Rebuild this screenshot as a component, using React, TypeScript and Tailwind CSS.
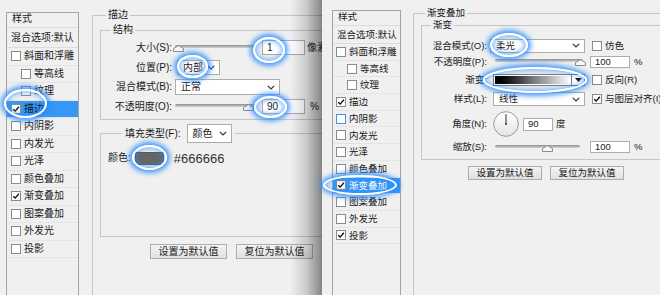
import React from "react";

type Item = { label: string; indent: boolean; checked: boolean; selected: boolean; hover: boolean };

const NAMES = ["斜面和浮雕", "等高线", "纹理", "描边", "内阴影", "内发光", "光泽", "颜色叠加", "渐变叠加", "图案叠加", "外发光", "投影"];

const makeItems = (checked: string[], selected: string, hover = ""): Item[] =>
  NAMES.map((label) => ({
    label,
    indent: label === "等高线" || label === "纹理",
    checked: checked.includes(label),
    selected: label === selected,
    hover: label === hover,
  }));

function Box({ checked = false, blue = false }: { checked?: boolean; blue?: boolean }) {
  return (
    <span
      className={`flex h-[10px] w-[10px] shrink-0 items-center justify-center border bg-white ${
        blue ? "border-[#3d95f0]" : "border-[#8a8a8a]"
      }`}
    >
      {checked && (
        <svg viewBox="0 0 10 10" className="h-[8px] w-[8px]">
          <path d="M1.5 5.2 4 7.6 8.6 2.2" fill="none" stroke="#111" strokeWidth="1.7" />
        </svg>
      )}
    </span>
  );
}

function Chevron() {
  return (
    <svg viewBox="0 0 8 5" className="h-[5px] w-[8px]">
      <path d="M0.8 0.8 4 4 7.2 0.8" fill="none" stroke="#333" strokeWidth="1.2" />
    </svg>
  );
}

function Select({ v, cls }: { v: string; cls: string }) {
  return (
    <div className={`flex items-center justify-between border border-[#acacac] bg-white pl-[5px] pr-[4px] ${cls}`}>
      <span>{v}</span>
      <Chevron />
    </div>
  );
}

function Field({ v, cls }: { v: string; cls: string }) {
  return <div className={`flex items-center border border-[#abadb3] bg-white pl-[4px] ${cls}`}>{v}</div>;
}

function Slider({ cls, pos }: { cls: string; pos: number }) {
  return (
    <div className={`relative h-[11px] ${cls}`}>
      <div className="absolute left-0 right-0 top-[3px] h-[3px] rounded-full bg-gradient-to-b from-[#8e8e8e] to-[#d6d6d6]" />
      <svg
        viewBox="0 0 11 7"
        className="absolute top-[3px] h-[7px] w-[11px]"
        style={{ left: `calc(${pos}% - 5px)` }}
      >
        <path d="M0.5 6.5V3.6L5.5 0.6 10.5 3.6V6.5Z" fill="#f6f6f6" stroke="#8a8a8a" />
      </svg>
    </div>
  );
}

function Btn({ t, cls }: { t: string; cls: string }) {
  return (
    <div className={`flex items-center justify-center border border-[#adadad] bg-gradient-to-b from-[#f4f4f4] to-[#e0e0e0] ${cls}`}>
      {t}
    </div>
  );
}

function Glow({ cls }: { cls: string }) {
  return (
    <div
      className={`pointer-events-none absolute rounded-[50%] border-2 border-white shadow-[0_0_5px_3px_rgba(40,140,255,0.85),inset_0_0_4px_2px_rgba(40,140,255,0.55)] ${cls}`}
    />
  );
}

function Sidebar({
  items,
  cls,
  headCls,
  blendCls,
  rowCls,
  boxPad,
  indentPad,
  gap,
  selText,
}: {
  items: Item[];
  cls: string;
  headCls: string;
  blendCls: string;
  rowCls: string;
  boxPad: string;
  indentPad: string;
  gap: string;
  selText: string;
}) {
  return (
    <div className={`flex shrink-0 flex-col border-l border-r border-t border-[#a3a3a3] ${cls}`}>
      <div className={`flex items-start border-b border-[#dcdcdc] pl-[5px] pt-[1px] ${headCls}`}>样式</div>
      <div className={`flex items-center whitespace-nowrap border-b border-[#dcdcdc] pl-[4px] ${blendCls}`}>混合选项:默认</div>
      {items.map((it) => (
        <div
          key={it.label}
          className={`flex items-center border-b border-[#e4e4e4] ${rowCls} ${it.indent ? indentPad : boxPad} ${
            it.selected ? `bg-[#3797f5] ${selText}` : ""
          }`}
        >
          <Box checked={it.checked} blue={it.hover} />
          <span className={gap}>{it.label}</span>
        </div>
      ))}
    </div>
  );
}

function Legend({ children, cls }: { children: React.ReactNode; cls: string }) {
  return <div className={`flex items-center self-start bg-[#f0f0f0] px-[2px] ${cls}`}>{children}</div>;
}

export default function App() {
  return (
    <div className="relative flex h-[295px] w-[660px] overflow-hidden bg-[#f0f0f0] font-['Liberation_Sans','Noto_Sans_CJK_SC',sans-serif] text-[10px] leading-none text-[#1a1a1a]">
      {/* 描边 */}
      <div className="relative flex h-[295px] w-[322px] shrink-0 overflow-hidden bg-[#f0f0f0]">
        <Sidebar
          items={makeItems(["描边", "渐变叠加"], "描边")}
          cls="ml-[6px] mt-[12px] w-[73px]"
          headCls="h-[15px]"
          blendCls="h-[20px]"
          rowCls="h-[17.5px]"
          boxPad="pl-[4px]"
          indentPad="pl-[14px]"
          gap="ml-[3px]"
          selText="text-[#111]"
        />
        <div className="ml-[13px] mt-[15px] flex w-[300px] shrink-0 flex-col border-l border-t border-[#c6c6c6]">
          <Legend cls="-mt-[8px] ml-[13px] h-[14px]">描边</Legend>

          <div className="ml-[7px] mt-[8px] flex h-[90px] w-[260px] flex-col border-b border-l border-t border-[#c6c6c6]">
            <Legend cls="-mt-[8px] ml-[10px] h-[14px]">结构</Legend>
            <div className="mt-[1px] flex h-[19.7px] items-center">
              <span className="w-[71px] text-right">大小(S):</span>
              <Slider cls="ml-[3px] w-[80px]" pos={4} />
              <Field v="1" cls="ml-[7px] h-[15px] w-[43px]" />
              <span className="ml-[2px]">像素</span>
            </div>
            <div className="flex h-[19.7px] items-center">
              <span className="w-[71px] text-right">位置(P):</span>
              <Select v="内部" cls="ml-[5px] h-[15px] w-[43px]" />
            </div>
            <div className="flex h-[19.7px] items-center">
              <span className="w-[71px] text-right">混合模式(B):</span>
              <Select v="正常" cls="ml-[3px] h-[16px] w-[105px]" />
            </div>
            <div className="flex h-[19.7px] items-center">
              <span className="w-[71px] text-right">不透明度(O):</span>
              <Slider cls="ml-[3px] w-[80px]" pos={91} />
              <Field v="90" cls="ml-[7px] h-[15px] w-[43px]" />
              <span className="ml-[5px]">%</span>
            </div>
          </div>

          <div className="ml-[7px] mt-[13px] flex h-[104px] w-[260px] flex-col border-b border-l border-t border-[#c6c6c6]">
            <Legend cls="-mt-[10px] ml-[21px] h-[19px] px-[3px]">
              <span>填充类型(F):</span>
              <Select v="颜色" cls="ml-[6px] h-[19px] w-[45px]" />
            </Legend>
            <div className="ml-[7px] mt-[7px] flex h-[16px] items-center">
              <span>颜色:</span>
              <span className="ml-[4px] h-[13px] w-[29px] border border-[#555] bg-[#666666]" />
              <span className="ml-[10px] text-[13px] text-[#333]">#666666</span>
            </div>
          </div>

          <div className="ml-[57px] mt-[7px] flex gap-[9px]">
            <Btn t="设置为默认值" cls="h-[15px] w-[77px]" />
            <Btn t="复位为默认值" cls="h-[15px] w-[77px]" />
          </div>
        </div>
        <div className="pointer-events-none absolute right-0 top-0 h-full w-[32px] bg-gradient-to-r from-transparent via-black/15 to-black/45" />
      </div>

      {/* 渐变叠加 */}
      <div className="relative flex h-[295px] w-[338px] shrink-0 overflow-hidden bg-[#f0f0f0] text-[9.5px]">
        <Sidebar
          items={makeItems(["描边", "渐变叠加", "投影"], "渐变叠加", "内阴影")}
          cls="ml-[10px] mt-[10px] w-[69px]"
          headCls="h-[15px]"
          blendCls="h-[18px]"
          rowCls="h-[16.7px]"
          boxPad="pl-[3px]"
          indentPad="pl-[14px]"
          gap="ml-[3px]"
          selText="text-white"
        />
        <div className="ml-[12px] mt-[13px] flex w-[300px] shrink-0 flex-col border-l border-t border-[#c6c6c6]">
          <Legend cls="-mt-[8px] ml-[11px] h-[14px]">渐变叠加</Legend>

          <div className="ml-[7px] mt-[5px] flex h-[135px] w-[300px] flex-col border-b border-l border-t border-[#c6c6c6]">
            <Legend cls="-mt-[8px] ml-[9px] h-[14px]">渐变</Legend>
            <div className="mt-[6px] flex h-[15px] items-center">
              <span className="w-[65px] text-right">混合模式(O):</span>
              <Select v="柔光" cls="ml-[3px] h-[14px] w-[95px]" />
              <span className="ml-[7px]">
                <Box />
              </span>
              <span className="ml-[3px]">仿色</span>
            </div>
            <div className="flex h-[17px] items-center">
              <span className="w-[65px] text-right">不透明度(P):</span>
              <Slider cls="ml-[8px] w-[88px]" pos={97} />
              <Field v="100" cls="ml-[7px] h-[12px] w-[40px]" />
              <span className="ml-[4px]">%</span>
            </div>
            <div className="flex h-[19px] items-center">
              <span className="w-[65px] text-right">渐变:</span>
              <div className="ml-[6px] flex h-[12px] w-[92px] border border-[#7a7a7a] bg-white">
                <div className="m-[1px] flex-1 bg-gradient-to-r from-black via-[#777] to-white" />
                <div className="flex w-[13px] items-center justify-center border-l border-[#7a7a7a]">
                  <svg viewBox="0 0 7 4" className="h-[4px] w-[7px]">
                    <path d="M0 0H7L3.5 4Z" fill="#111" />
                  </svg>
                </div>
              </div>
              <span className="ml-[7px]">
                <Box />
              </span>
              <span className="ml-[3px]">反向(R)</span>
            </div>
            <div className="flex h-[20px] items-center">
              <span className="w-[65px] text-right">样式(L):</span>
              <Select v="线性" cls="ml-[6px] h-[14px] w-[92px]" />
              <span className="ml-[7px]">
                <Box checked />
              </span>
              <span className="ml-[3px] whitespace-nowrap">与图层对齐(I)</span>
            </div>
            <div className="flex h-[30px] items-center">
              <span className="w-[65px] text-right">角度(N):</span>
              <svg viewBox="0 0 26 26" className="ml-[6px] h-[26px] w-[26px]">
                <defs>
                  <linearGradient id="dial" x1="0" y1="0" x2="0" y2="1">
                    <stop offset="0" stopColor="#ffffff" />
                    <stop offset="1" stopColor="#e4e4e4" />
                  </linearGradient>
                </defs>
                <circle cx="13" cy="13" r="12.3" fill="url(#dial)" stroke="#9a9a9a" />
                <line x1="13" y1="13" x2="13" y2="3" stroke="#333" strokeWidth="1" />
                <circle cx="13" cy="13" r="1" fill="#333" />
              </svg>
              <Field v="90" cls="ml-[4px] h-[13px] w-[30px]" />
              <span className="ml-[3px]">度</span>
            </div>
            <div className="flex h-[16px] items-center">
              <span className="w-[65px] text-right">缩放(S):</span>
              <Slider cls="ml-[8px] w-[85px]" pos={61} />
              <Field v="100" cls="ml-[10px] h-[12px] w-[40px]" />
              <span className="ml-[4px]">%</span>
            </div>
          </div>

          <div className="ml-[54px] mt-[6px] flex gap-[8px]">
            <Btn t="设置为默认值" cls="h-[14px] w-[74px]" />
            <Btn t="复位为默认值" cls="h-[14px] w-[74px]" />
          </div>
        </div>
      </div>

      <Glow cls="left-[253px] top-[37px] h-[26px] w-[32px]" />
      <Glow cls="left-[177px] top-[55px] h-[23px] w-[31px]" />
      <Glow cls="left-[254px] top-[96px] h-[22px] w-[33px]" />
      <Glow cls="left-[4px] top-[89px] h-[29px] w-[43px]" />
      <Glow cls="left-[132px] top-[145px] h-[25px] w-[35px]" />
      <Glow cls="left-[490px] top-[33px] h-[24px] w-[38px]" />
      <Glow cls="left-[483px] top-[67px] h-[26px] w-[104px]" />
      <Glow cls="left-[323px] top-[175px] h-[20px] w-[74px]" />
    </div>
  );
}
